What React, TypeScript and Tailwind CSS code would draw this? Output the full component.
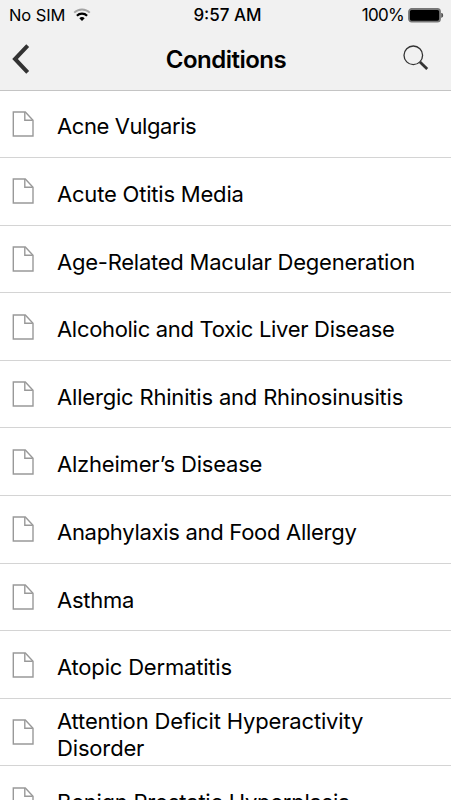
const conditions = [
  { name: "Acne Vulgaris", tracking: "tracking-[-0.42px]" },
  { name: "Acute Otitis Media", tracking: "tracking-[-0.2px]" },
  { name: "Age-Related Macular Degeneration", tracking: "tracking-[-0.24px]" },
  { name: "Alcoholic and Toxic Liver Disease", tracking: "tracking-[-0.31px]" },
  { name: "Allergic Rhinitis and Rhinosinusitis", tracking: "tracking-[-0.19px]" },
  { name: "Alzheimer’s Disease", tracking: "tracking-[-0.2px]" },
  { name: "Anaphylaxis and Food Allergy", tracking: "tracking-[-0.29px]" },
  { name: "Asthma", tracking: "tracking-[-0.25px]" },
  { name: "Atopic Dermatitis", tracking: "tracking-[-0.19px]" },
  { name: "Attention Deficit Hyperactivity Disorder", tracking: "tracking-[-0.16px]" },
  { name: "Benign Prostatic Hyperplasia", tracking: "tracking-[-0.25px]" },
];

const WifiIcon = () => (
  <svg width="18" height="14" viewBox="0 0 18 14" fill="none">
    <path d="M1.2 4.7a11 11 0 0 1 15.6 0" stroke="#a3a3a3" strokeWidth="1.9" />
    <path d="M3.9 7.7a7.2 7.2 0 0 1 10.2 0" stroke="#000" strokeWidth="2.2" />
    <path d="M6.3 10.3a3.8 3.8 0 0 1 5.4 0L9 13.1z" fill="#000" />
  </svg>
);

const BatteryIcon = () => (
  <svg width="36" height="15" viewBox="0 0 36 15">
    <rect x="1" y="1" width="31" height="12.6" rx="2.6" fill="#000" stroke="#777" strokeWidth="1.8" />
    <path d="M33.7 5.2c1.3.4 1.3 3.8 0 4.2z" fill="#333" stroke="#333" strokeWidth="0.6" />
  </svg>
);

const BackIcon = () => (
  <svg width="20" height="30" viewBox="0 0 20 30" fill="none">
    <path d="M17.7 1.7 5 15l12.7 13.3" stroke="#333" strokeWidth="4" />
  </svg>
);

const SearchIcon = () => (
  <svg width="27" height="27" viewBox="0 0 27 27" fill="none">
    <circle cx="11.3" cy="11.3" r="9.3" stroke="#333" strokeWidth="1.3" />
    <path d="m18 18 7.2 7" stroke="#333" strokeWidth="2.8" />
  </svg>
);

const FileIcon = () => (
  <svg className="shrink-0" width="22" height="26" viewBox="0 0 22 26" fill="none" stroke="#999" strokeWidth="1.4">
    <path d="M1.3 1h12l7.7 8.2V25H1.3z" />
    <path d="M12.8 1v8.3h8" />
  </svg>
);

const App = () => {
  return (
    <div className="flex h-[800px] w-full flex-col overflow-hidden bg-white font-['Inter',sans-serif] text-black">
      <header className="h-[90.5px] shrink-0 border-b border-[#c4c4c4] bg-[#f1f1f1]">
        <div className="grid h-[30px] grid-cols-3 items-center pl-[9px] pr-[7px] text-[17px]">
          <div className="flex items-center gap-2">
            <span className="whitespace-nowrap text-[16.5px] tracking-[-0.1px]">No SIM</span>
            <WifiIcon />
          </div>
          <span className="pl-0.5 pt-px text-center font-medium whitespace-nowrap">9:57 AM</span>
          <div className="flex items-center justify-end gap-1">
            <span className="pt-px tracking-[-0.7px]">100%</span>
            <BatteryIcon />
          </div>
        </div>
        <div className="grid h-[58px] grid-cols-3 items-center pl-[10px] pr-[22px]">
          <button className="w-fit">
            <BackIcon />
          </button>
          <h1 className="pl-[13px] pt-0.5 text-center text-2xl font-semibold tracking-[-0.5px]">Conditions</h1>
          <button className="w-fit justify-self-end pb-1">
            <SearchIcon />
          </button>
        </div>
      </header>
      <ul>
        {conditions.map(({ name, tracking }) => (
          <li
            key={name}
            className="flex h-[67.6px] items-center gap-[23px] border-b border-[#d4d4d4] pl-3"
          >
            <FileIcon />
            <span className={`w-[375px] pt-[6.4px] text-[22px] leading-[27px] ${tracking}`}>{name}</span>
          </li>
        ))}
      </ul>
    </div>
  );
};

export default App;
